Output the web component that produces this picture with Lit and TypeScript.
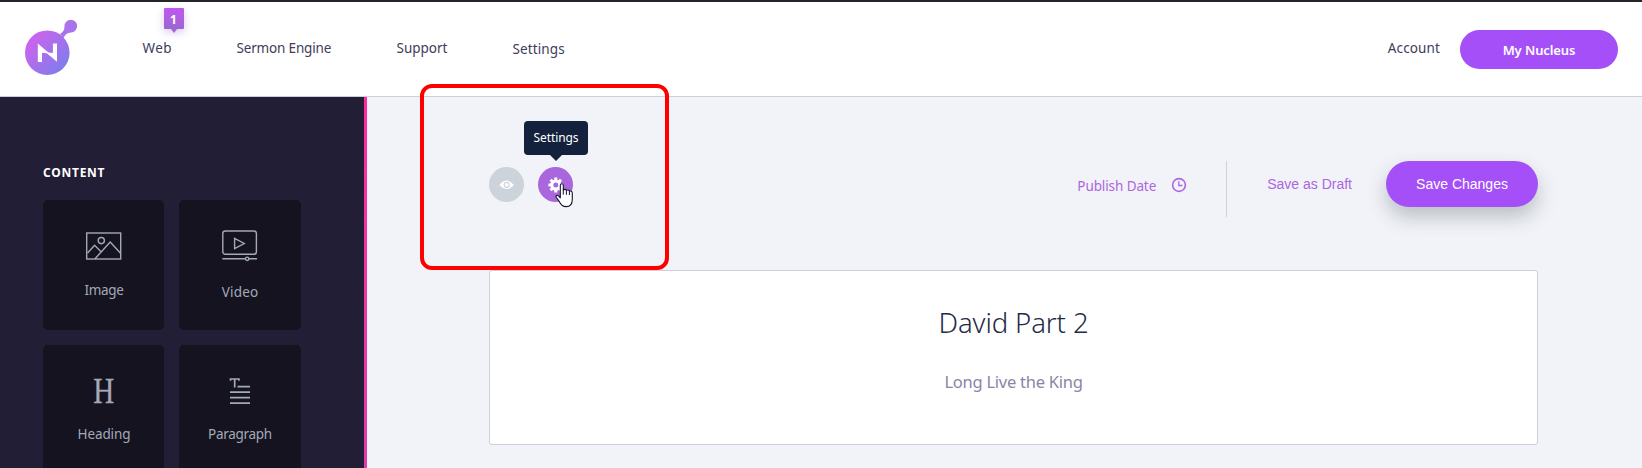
import { LitElement, html, css, svg } from "lit";
import { customElement, property } from "lit/decorators.js";

const icons: Record<string, unknown> = {
  image: svg`<rect x=".7" y="5" width="34" height="26"/><circle cx="15.3" cy="12.6" r="3.1"/><path d="M1.5 25 L8.6 17.2 L14.8 23.4 M8.8 31 L24.2 14 L34.6 25.2"/>`,
  video: svg`<rect x=".8" y="3" width="33.6" height="23.3" rx="2.6"/><path d="M12.6 10.4 V20.6 L22.2 15.5 Z"/><path d="M.3 30.8 H23.4 M27 30.8 H35"/><circle cx="25.2" cy="30.8" r="1.7"/>`,
  paragraph: svg`<path d="M8.5 7.7 V6 H16.9 V7.7 M12.7 6 V14.5 M15.5 13.7 H28 M8 19.2 H28 M8 24.7 H28 M8 30.2 H28"/>`,
};

@customElement("block-card")
export class BlockCard extends LitElement {
  @property() kind = "";
  @property() label = "";
  static styles = css`
    :host { display: flex; flex-direction: column; align-items: center; box-sizing: border-box; height: 130px; padding-top: 28px; background: #161321; border-radius: 5px; color: #a3a9b7; }
    svg { display: block; width: 36px; height: 36px; fill: none; stroke: #a3a9b7; stroke-width: 1.4; }
    .icon { height: 52px; }
    .icon.video { height: 54px; }
    .icon.heading, .icon.paragraph { height: 51px; }
    .icon.paragraph svg { stroke-width: 1.7; }
    .glyph { display: block; padding-top: 1px; font: 35px/36px "Liberation Serif", serif; transform: scaleX(.83); -webkit-text-stroke: .3px #a3a9b7; }
    .label { font-size: 13.5px; line-height: 20px; }
    .label.image { letter-spacing: -.3px; padding-left: 1px; }
    .label.video { letter-spacing: .2px; }
    .label.heading { letter-spacing: -.1px; padding-left: 1px; }
    .label.paragraph { letter-spacing: -.29px; }
  `;
  render() {
    return html`<div class="icon ${this.kind}">
        ${this.kind === "heading" ? html`<span class="glyph">H</span>` : html`<svg viewBox="0 0 36 36">${icons[this.kind]}</svg>`}
      </div>
      <div class="label ${this.kind}">${this.label}</div>`;
  }
}

@customElement("app-root")
export class AppRoot extends LitElement {
  static styles = css`
    :host { display: flex; flex-direction: column; position: relative; box-sizing: border-box; height: 468px; overflow: hidden; background: #f2f3f8; font-family: "Noto Sans", "Open Sans", sans-serif; font-size: 13.5px; line-height: 20px; white-space: nowrap; }
    svg { display: block; }
    header { display: flex; box-sizing: border-box; flex: none; height: 97px; background: #fff; border-top: 2px solid #25242c; border-bottom: 1px solid #c9d1d9; color: #3e3d5a; }
    .logo { width: 60px; height: 60px; margin: 16px 0 0 22px; }
    nav { display: grid; grid-template-columns: 94px 160px 116px 60px; margin: 36px 0 0 60.5px; height: 21px; }
    .web { position: relative; letter-spacing: .4px; }
    .badge { position: absolute; left: 21px; top: -30px; width: 20px; height: 21px; line-height: 23px; text-align: center; border-radius: 1px; background: linear-gradient(#c057ef, #9a68d0); box-shadow: 0 3px 9px rgba(150, 90, 220, .35); color: #fff; font-weight: 700; font-size: 12px; letter-spacing: 0; }
    .badge::after { content: ""; position: absolute; left: 7px; top: 21px; border: 3px solid transparent; border-top: 4px solid #9a68d0; border-bottom: 0; }
    .engine { letter-spacing: -.17px; }
    .support { letter-spacing: 0; }
    .settings { padding-top: 1px; letter-spacing: .12px; }
    .account { margin: 36px 20px 0 auto; letter-spacing: .12px; }
    .nucleus { width: 158px; height: 39px; margin: 28px 24px 0 0; border-radius: 20px; background: #a44ff7; color: #fff; font-weight: 600; font-size: 13px; letter-spacing: -.1px; line-height: 40px; text-align: center; }
    .body { display: flex; flex: 1; min-height: 0; }
    aside { box-sizing: border-box; width: 367px; padding: 66px 0 0 43px; background: linear-gradient(#ff2ba0, #e03cab) right / 3px 100% no-repeat #211e35; }
    h2 { margin: 0 0 17px; font-size: 12px; line-height: 20px; font-weight: 700; letter-spacing: .75px; color: #fff; }
    .cards { display: grid; grid-template-columns: 121px 122px; gap: 15px; }
    main { flex: 1; padding: 64px 104px 0 122px; }
    .tools { display: flex; height: 56px; margin-bottom: 53px; }
    .round { width: 35px; height: 35px; margin: 6px 14px 0 0; border-radius: 50%; background: #ccd3da; }
    .gear { position: relative; background: #a966dd; }
    .tip { position: absolute; left: -14px; top: -46px; width: 64px; height: 34px; line-height: 34px; border-radius: 4px; background: #14213d; color: #fff; font-size: 12px; letter-spacing: -.1px; text-align: center; }
    .tip::after { content: ""; position: absolute; left: 26px; top: 34px; border: 6px solid transparent; border-top-color: #14213d; border-bottom: 0; }
    .cursor { position: absolute; left: 17px; top: 16px; }
    .publish { display: flex; margin: 15px 39px 0 auto; color: #ac66de; letter-spacing: -.1px; }
    .publish svg { margin: 1px 0 0 15px; }
    .rule { width: 1px; background: #ccd3da; }
    .draft { margin: 13px 34px 0 40px; color: #ac66de; font: 14px/20px "Liberation Sans", sans-serif; }
    .save { width: 152px; height: 46px; border-radius: 23px; background: #a44ff7; box-shadow: 0 10px 20px rgba(40, 60, 70, .28); color: #fff; text-align: center; font: 14px/47px "Liberation Sans", sans-serif; }
    .panel { box-sizing: border-box; height: 175px; padding-top: 32px; border: 1px solid #cbd1da; border-radius: 3px; background: #fff; text-align: center; }
    h1 { margin: 0 0 27px; font-size: 27.5px; line-height: 40px; font-weight: 300; letter-spacing: -.1px; color: #1f2c47; }
    .sub { font-size: 16.5px; line-height: 24px; font-weight: 400; letter-spacing: -.25px; color: #8786a6; }
    .mark { position: absolute; left: 420px; top: 84px; box-sizing: border-box; width: 249px; height: 186px; border: 4px solid #f00; border-radius: 12px; }
  `;
  render() {
    return html`
      <header>
        <svg class="logo" viewBox="22 18 60 60">
          <defs><linearGradient id="g" gradientUnits="userSpaceOnUse" x1="28" y1="38" x2="64" y2="70"><stop stop-color="#cf62ee"/><stop offset="1" stop-color="#7f7deb"/></linearGradient>
          <linearGradient id="d" x1="0" y1="0" x2="1" y2="1"><stop stop-color="#b271ec"/><stop offset="1" stop-color="#a075ec"/></linearGradient></defs>
          <circle cx="47.3" cy="52.7" r="22.3" fill="url(#g)"/>
          <path fill="url(#d)" d="M60 34 Q64.6 31.5 64.5 26 A6.3 6.3 0 1 1 71 32.4 Q65.5 32.6 63.5 38.2 Z"/>
          <path fill="#fff" d="M37.8 43.6 L48.4 52.6 L52.9 53 V43.6 H57 V61.8 L46.8 53.2 L42 52.8 V62 H37.8 Z"/>
        </svg>
        <nav>
          <span class="web">Web<span class="badge">1</span></span>
          <span class="engine">Sermon Engine</span><span class="support">Support</span><span class="settings">Settings</span>
        </nav>
        <span class="account">Account</span>
        <div class="nucleus">My Nucleus</div>
      </header>
      <div class="body">
        <aside>
          <h2>CONTENT</h2>
          <div class="cards">
            <block-card kind="image" label="Image"></block-card>
            <block-card kind="video" label="Video"></block-card>
            <block-card kind="heading" label="Heading"></block-card>
            <block-card kind="paragraph" label="Paragraph"></block-card>
          </div>
        </aside>
        <main>
          <div class="tools">
            <div class="round"><svg width="35" height="35" viewBox="0 0 35 35"><path fill="#fff" d="M10.5 18 Q17.5 9.2 25 18 Q17.5 26.2 10.5 18Z"/><circle cx="17.7" cy="17.8" r="2.5" fill="#fff" stroke="#ccd3da" stroke-width="1.2"/></svg></div>
            <div class="round gear">
              <svg width="35" height="35" viewBox="-17.8 -18 35 35">
                <g stroke="#fff" stroke-width="3">${[0, 45, 90, 135].map((a) => svg`<path d="M0 -7.4 V-4 M0 4 V7.4" transform="rotate(${a})"/>`)}</g>
                <circle r="4" fill="none" stroke="#fff" stroke-width="3"/>
              </svg>
              <div class="tip">Settings</div>
              <svg class="cursor" width="19" height="25" viewBox="0 0 19 25"><path fill="#fff" stroke="#15152a" stroke-width="1.1" stroke-linejoin="round" d="M5.3 14.8 V2.2 C5.3 .2 8.3 .2 8.3 2.2 V7 C9.4 5.9 11.2 6.3 11.4 7.4 C12.6 6.5 14.2 7 14.4 8.2 C15.8 7.6 17.3 8.4 17.3 10 V16.2 C17.3 20.6 15 23.6 11.2 23.6 C7.4 23.6 5.9 21.8 4.2 18.4 L1.2 14.2 C.4 12.6 2.3 11.6 3.6 12.8 Z"/><path fill="none" stroke="#15152a" d="M8.3 6.6 V11.6 M11.4 7.4 V11.8 M14.4 8.2 V12"/></svg>
            </div>
            <div class="publish">Publish Date<svg width="16" height="16" viewBox="0 0 16 16" fill="none" stroke="#ac66de" stroke-width="1.6"><circle cx="8" cy="8" r="6.4"/><path stroke-width="1.3" d="M7.8 4.3 V8.5 H11.4"/></svg></div>
            <div class="rule"></div>
            <div class="draft">Save as Draft</div>
            <div class="save">Save Changes</div>
          </div>
          <section class="panel"><h1>David Part 2</h1><div class="sub">Long Live the King</div></section>
        </main>
      </div>
      <div class="mark"></div>
    `;
  }
}
